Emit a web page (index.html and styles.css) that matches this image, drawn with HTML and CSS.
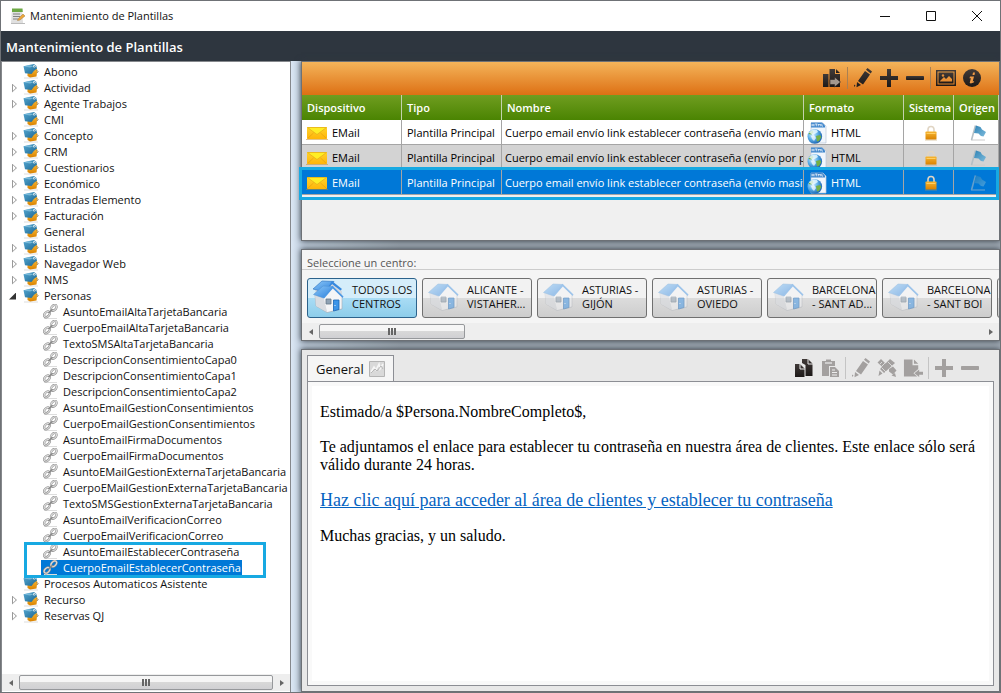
FILE: index.html
```html
<!DOCTYPE html>
<html lang="es">
<head>
<meta charset="utf-8">
<title>Mantenimiento de Plantillas</title>
<link rel="stylesheet" href="styles.css">
</head>
<body>
<svg class="defs" aria-hidden="true">
  <defs>
    <linearGradient id="gBlue" x1="0" y1="0" x2="1" y2="1"><stop offset="0" stop-color="#56a9d4"/><stop offset="1" stop-color="#1d6791"/></linearGradient>
    <linearGradient id="gFlag" x1="0" y1="0" x2="1" y2="1"><stop offset="0" stop-color="#2f83b5"/><stop offset="1" stop-color="#7dbbdc"/></linearGradient>
    <linearGradient id="gOrange" x1="0" y1="0" x2="0" y2="1"><stop offset="0" stop-color="#f7b632"/><stop offset="1" stop-color="#d98200"/></linearGradient>
    <linearGradient id="gMail" x1="0" y1="0" x2="0" y2="1"><stop offset="0" stop-color="#ffd32e"/><stop offset="1" stop-color="#ffb508"/></linearGradient>
    <linearGradient id="gRoof" x1="0" y1="0" x2="1" y2="1"><stop offset="0" stop-color="#8cc8f8"/><stop offset="1" stop-color="#2b7fdc"/></linearGradient>
    <linearGradient id="gWall" x1="0" y1="0" x2="1" y2="1"><stop offset="0" stop-color="#ffffff"/><stop offset="1" stop-color="#c4c8ce"/></linearGradient>
    <radialGradient id="gGlobe" cx=".35" cy=".35" r=".7"><stop offset="0" stop-color="#d9f2ff"/><stop offset=".5" stop-color="#5aaee8"/><stop offset="1" stop-color="#1b62b0"/></radialGradient>
    <linearGradient id="gDark" x1="0" y1="0" x2="0" y2="1"><stop offset="0" stop-color="#403a38"/><stop offset="1" stop-color="#1d1918"/></linearGradient>
  </defs>
  <symbol id="tag" viewBox="0 0 16 16">
    <path d="M1 14h14" stroke="#ddd" stroke-width="1"/>
    <path d="m4.500 8 9.500-3.500.3 2-.8 6-6.500 1L4.500 12z" fill="url(#gOrange)"/>
    <path d="M.5 2.300 6 1 11 0l2.300 1.700.7 3-3 2L8.500 10 2 9.300z" fill="url(#gBlue)"/>
    <path d="m1 2.500 5-1.200 4.500 1L7 3.500z" fill="#8fc9e4" opacity=".7"/>
    <circle cx="11.300" cy="2.300" r="1.200" fill="#e8f5fb"/><circle cx="11.300" cy="2.300" r=".5" fill="#245f80"/>
    <path d="m13.500 6.500 1.800 1-1.300 1.500" fill="none" stroke="#876a40" stroke-width=".7"/>
  </symbol>
  <symbol id="chain" viewBox="0 0 16 16">
    <path d="M1 14.500h13" stroke="#ddd"/>
    <g fill="none" stroke="#8b8b8b" stroke-width="2.200"><ellipse cx="10.800" cy="3.800" rx="3.300" ry="2.200" transform="rotate(-45 10.800 3.800)"/><ellipse cx="4" cy="10.300" rx="3.300" ry="2.200" transform="rotate(-45 4 10.300)"/></g>
    <g fill="none" stroke="#dedede" stroke-width="1.100"><ellipse cx="10.800" cy="3.800" rx="3.300" ry="2.200" transform="rotate(-45 10.800 3.800)"/><ellipse cx="4" cy="10.300" rx="3.300" ry="2.200" transform="rotate(-45 4 10.300)"/></g>
    <path d="m5.500 9 4-3.800" stroke="#888" stroke-width="1.500"/>
  </symbol>
  <symbol id="mail" viewBox="0 0 22 14">
    <path d="M0 13.500h22" stroke="#c58b22" opacity=".5"/>
    <rect x="1" y="1" width="20" height="12" rx="1" fill="url(#gMail)"/>
    <path d="m1.500 1.500 9.500 7 9.500-7z" fill="#ffee25" stroke="#e3ac18" stroke-width=".7"/>
    <path d="m1.500 12.500 6-5.500m13 5.500-6-5.500" stroke="#e5a010" stroke-width=".7"/>
  </symbol>
  <symbol id="htmlfile" viewBox="0 0 20 22">
    <path d="M4 1h12l3 3v17H4z" fill="#f1f6fc" stroke="#b8c6d8" stroke-width=".7"/>
    <path d="M4 .500h11l3 3v2H4z" fill="#3f86cc"/>
    <path d="M5 1.800v2.500M7 1.800v2.500M5 3h2m1-1h2.500M9.300 2v2.300m2 0V2l1 1 1-1v2.300m1.500-2.500v2.300H16" fill="none" stroke="#fff" stroke-width=".7"/>
    <circle cx="7.800" cy="14.500" r="7.300" fill="url(#gGlobe)"/>
    <path d="M1.500 12q1-3 4-3.500l1 2-2 2zM9 14l4-1 1.300 2-2.300 4-2 .5z" fill="#74b044"/>
    <path d="M2 10.500q3-4 8-2.500l1 2-5 3z" fill="#eefaff" opacity=".8"/><path d="m4 14 3-1 2 3-2 3-2-2z" fill="#fff" opacity=".7"/>
  </symbol>
  <symbol id="lock" viewBox="0 0 14 16">
    <path d="M1 15h12" stroke="#b99a5c" opacity=".5"/>
    <path d="M4 7V4.500a3 3 0 0 1 6 0V7" fill="none" stroke="#e0d5c4" stroke-width="1.600"/>
    <rect x="1.500" y="6.500" width="11" height="8" rx=".8" fill="url(#gOrange)"/>
    <path d="M2.500 8.500h9" stroke="#ffcf62"/>
  </symbol>
  <symbol id="flag" viewBox="0 0 16 16">
    <path d="M1 15h14" stroke="#ccc"/><path d="M5.500.500 1.500 15" stroke="#b4bfc5" stroke-width="1.600"/>
    <path d="M6 .500 10.500 2l1.500 2.500 4 2.500-2.500 4.500-2.500-.5-2.500-2.500-4.500-.5z" fill="url(#gFlag)"/>
  </symbol>
  <symbol id="house" viewBox="0 0 32 28">
    <path d="m2 9.500 8 2.500L19.500 2 29 11.500V24l-15 3.500L3 21z" fill="url(#gWall)" stroke="#a7adb5" stroke-width=".6"/>
    <path d="M10.500 12.500 19.500 3 28.500 12v11.500L14 27z" fill="#f4f5f7"/>
    <path d="M10.500 12.500 14 27 3 21 2.500 10z" fill="#d9dce1"/>
    <path d="M.5 9.500 10 1l10 .5L10.500 13z" fill="url(#gRoof)" stroke="#4a8fd0" stroke-width=".5"/>
    <path d="m19.500.8 11 10.700-.8 1.500L19.800 3.500l-8.500 9.800-1.300-.3z" fill="#4b98e5"/>
    <path d="M13 14h5v5h-5z" fill="#8fa2b4" stroke="#667788" stroke-width=".8"/>
    <path d="M20.500 15h5.500v9.500L20.500 26z" fill="#3d95e8" stroke="#1764b5" stroke-width=".8"/><circle cx="22" cy="20.500" r=".6" fill="#fff"/>
  </symbol>
  <symbol id="houses" viewBox="0 0 34 34">
    <path d="m3 9 8 2 9-8 10 8v12L5 22z" fill="#d4d9df"/><path d="M1 9 10 1l12 .5L12 12z" fill="url(#gRoof)" stroke="#286ebd" stroke-width=".6"/><path d="m20 1 10 8-1.500 1.500L20 4l-7 8z" fill="#3789df"/>
    <use href="#house" x="1" y="5" width="32" height="28"/>
  </symbol>
  <symbol id="copyto" viewBox="0 0 20 20"><path d="M7.500 1H13v5h5v13H7.500z"/><path d="M14 1l4 4h-4z"/><path d="M1 6h5.500v13H1z"/><path d="M8 11.500h4.500V9l6 5-6 5v-2.500H8z" fill="#a39990" stroke="#2a2422" stroke-width=".6"/></symbol>
  <symbol id="pencil" viewBox="0 0 20 20"><path d="m12 3 5 3.500-7 10-5-3.500zM4 14l4 3-4.500 2.200zM13 1.800 14.500 0l4.500 3.500-1.300 2z"/><path d="M1 16.500l1.500 1-1.500 1.500z"/></symbol>
  <symbol id="plus" viewBox="0 0 20 20"><path d="M8 1h4v7h7v4h-7v7H8v-7H1V8h7z"/></symbol>
  <symbol id="minus" viewBox="0 0 20 20"><rect x="1" y="8" width="18" height="4" rx=".7"/></symbol>
  <symbol id="image" viewBox="0 0 20 18"><path fill-rule="evenodd" d="M0 1h20v16H0zm1.500 1.500v13h17v-13z"/><path fill-rule="evenodd" d="M2.500 3.500h15v11h-15zm1.500 9h12V10l-3-3-3 3-2-2-4 4z"/><circle cx="7" cy="6.500" r="1.200" fill="#e48f3b"/></symbol>
  <symbol id="info" viewBox="0 0 20 20"><circle cx="10" cy="10" r="9"/><path d="M11 4.500h2L12.500 7h-2zM8 8.500h4l-1.300 5 1.500-.5-.5 1.500-3 1-1-.8 1.200-4.500H7.500z" fill="#ef9a45"/></symbol>
  <symbol id="copy" viewBox="0 0 20 20"><path d="M8 1h6l4.500 4.500V18h-7V7L8 5z"/><path d="M1 6h5l4.500 4.500V19H1z"/><path d="M6 5.500V11h5M14 1v5h5" fill="none" stroke="#e8e8e8"/></symbol>
  <symbol id="paste" viewBox="0 0 20 20"><path d="M2 3h4V1.500h5V3h4v5H9v10H2z"/><path d="M5 5h7" stroke="#e8e8e8" stroke-width="1.300"/><path d="M10 9h5l4 4v6h-9z"/><path d="M12 12h3m-3 2.500h5M12 17h5" stroke="#eee"/></symbol>
  <symbol id="tools" viewBox="0 0 20 20"><path d="m.5 4.500 3.500-3.500 5 5-3 3.500zM12 11l4-2.500 3.500 4-3.500 4-4-3zM13 1l5 4-11 10-4-4zM2.500 12.500l3 3L1.500 18zM14.500 17.500l3.500-2.500 1 4z"/><path d="m3 6 2-2M5 8l3-3M11 4l4 4M5 10l4 4" stroke="#e8e8e8" stroke-width=".8"/></symbol>
  <symbol id="export" viewBox="0 0 21 20"><path d="M1 1h9v6h6v4l-5 4.500 4 3.500H1z"/><path d="m11.500 1 4.500 4.500h-4.500zM12 15.500l5-4V14h4v3h-4v2.500z"/></symbol>
</svg>

<div class="window">
  <header class="titlebar">
    <svg class="app-icon" viewBox="0 0 16 16" aria-hidden="true"><path d="M1 15.500h14" stroke="#bbb"/><path d="M2 1h10l1 14H1z" fill="#e0e0e0"/><path d="M2 .500h10.500l.3 3.500H2z" fill="#6ca844"/><path d="M3 6h7M3 8.500h7M3 11h5" stroke="#828282"/><path d="m8 11 5-5 2 2-5 4-2.500.5z" fill="#eda63a" stroke="#9f793f" stroke-width=".5"/></svg>
    <span class="title">Mantenimiento de Plantillas</span>
    <div class="window-controls">
      <button aria-label="Minimizar"><svg viewBox="0 0 12 12"><path d="M1 6.500h10"/></svg></button>
      <button aria-label="Maximizar"><svg viewBox="0 0 12 12"><path d="M1.500 1.500h9v9h-9z"/></svg></button>
      <button aria-label="Cerrar"><svg viewBox="0 0 12 12"><path d="m1 1 10 10M11 1 1 11"/></svg></button>
    </div>
  </header>
  <h1 class="heading">Mantenimiento de Plantillas</h1>

  <div class="body">
    <nav class="sidebar" aria-label="Plantillas">
      <ul class="tree">
        <li><i class="toggle"></i><svg><use href="#tag"/></svg><span>Abono</span></li>
        <li><button class="toggle" aria-label="Expandir Actividad"></button><svg><use href="#tag"/></svg><span>Actividad</span></li>
        <li><button class="toggle" aria-label="Expandir Agente Trabajos"></button><svg><use href="#tag"/></svg><span>Agente Trabajos</span></li>
        <li><i class="toggle"></i><svg><use href="#tag"/></svg><span>CMI</span></li>
        <li><button class="toggle" aria-label="Expandir Concepto"></button><svg><use href="#tag"/></svg><span>Concepto</span></li>
        <li><button class="toggle" aria-label="Expandir CRM"></button><svg><use href="#tag"/></svg><span>CRM</span></li>
        <li><button class="toggle" aria-label="Expandir Cuestionarios"></button><svg><use href="#tag"/></svg><span>Cuestionarios</span></li>
        <li><button class="toggle" aria-label="Expandir Económico"></button><svg><use href="#tag"/></svg><span>Económico</span></li>
        <li><button class="toggle" aria-label="Expandir Entradas Elemento"></button><svg><use href="#tag"/></svg><span>Entradas Elemento</span></li>
        <li><button class="toggle" aria-label="Expandir Facturación"></button><svg><use href="#tag"/></svg><span>Facturación</span></li>
        <li><i class="toggle"></i><svg><use href="#tag"/></svg><span>General</span></li>
        <li><button class="toggle" aria-label="Expandir Listados"></button><svg><use href="#tag"/></svg><span>Listados</span></li>
        <li><button class="toggle" aria-label="Expandir Navegador Web"></button><svg><use href="#tag"/></svg><span>Navegador Web</span></li>
        <li><button class="toggle" aria-label="Expandir NMS"></button><svg><use href="#tag"/></svg><span>NMS</span></li>
        <li><button class="toggle open" aria-label="Contraer Personas"></button><svg><use href="#tag"/></svg><span>Personas</span>
          <ul>
            <li><svg><use href="#chain"/></svg><span>AsuntoEmailAltaTarjetaBancaria</span></li>
            <li><svg><use href="#chain"/></svg><span>CuerpoEmailAltaTarjetaBancaria</span></li>
            <li><svg><use href="#chain"/></svg><span>TextoSMSAltaTarjetaBancaria</span></li>
            <li><svg><use href="#chain"/></svg><span>DescripcionConsentimientoCapa0</span></li>
            <li><svg><use href="#chain"/></svg><span>DescripcionConsentimientoCapa1</span></li>
            <li><svg><use href="#chain"/></svg><span>DescripcionConsentimientoCapa2</span></li>
            <li><svg><use href="#chain"/></svg><span>AsuntoEmailGestionConsentimientos</span></li>
            <li><svg><use href="#chain"/></svg><span>CuerpoEmailGestionConsentimientos</span></li>
            <li><svg><use href="#chain"/></svg><span>AsuntoEmailFirmaDocumentos</span></li>
            <li><svg><use href="#chain"/></svg><span>CuerpoEmailFirmaDocumentos</span></li>
            <li><svg><use href="#chain"/></svg><span>AsuntoEMailGestionExternaTarjetaBancaria</span></li>
            <li><svg><use href="#chain"/></svg><span>CuerpoEMailGestionExternaTarjetaBancaria</span></li>
            <li><svg><use href="#chain"/></svg><span>TextoSMSGestionExternaTarjetaBancaria</span></li>
            <li><svg><use href="#chain"/></svg><span>AsuntoEmailVerificacionCorreo</span></li>
            <li><svg><use href="#chain"/></svg><span>CuerpoEmailVerificacionCorreo</span></li>
            <li><svg><use href="#chain"/></svg><span>AsuntoEmailEstablecerContraseña</span></li>
            <li class="current"><svg><use href="#chain"/></svg><span>CuerpoEmailEstablecerContraseña</span></li>
          </ul>
        </li>
        <li><i class="toggle"></i><svg><use href="#tag"/></svg><span>Procesos Automaticos Asistente</span></li>
        <li><button class="toggle" aria-label="Expandir Recurso"></button><svg><use href="#tag"/></svg><span>Recurso</span></li>
        <li><button class="toggle" aria-label="Expandir Reservas QJ"></button><svg><use href="#tag"/></svg><span>Reservas QJ</span></li>
      </ul>
      <div class="scrollbar"><button class="arrow left" aria-label="Izquierda"></button><div class="track"><div class="thumb wide"></div></div><button class="arrow right" aria-label="Derecha"></button></div>
    </nav>

    <main class="content">
      <section class="panel templates">
        <div class="toolbar orange">
          <button aria-label="Duplicar"><svg><use href="#copyto"/></svg></button><i class="sep"></i>
          <button aria-label="Editar"><svg><use href="#pencil"/></svg></button>
          <button aria-label="Añadir"><svg><use href="#plus"/></svg></button>
          <button aria-label="Quitar"><svg><use href="#minus"/></svg></button><i class="sep"></i>
          <button aria-label="Imagen"><svg><use href="#image"/></svg></button>
          <button aria-label="Información"><svg><use href="#info"/></svg></button>
        </div>
        <div class="grid-wrap">
        <table class="grid">
          <colgroup><col class="c100"><col class="c100"><col><col class="c100"><col class="c50"><col class="c45"></colgroup>
          <thead><tr><th>Dispositivo</th><th>Tipo</th><th>Nombre</th><th>Formato</th><th>Sistema</th><th>Origen</th></tr></thead>
          <tbody>
            <tr><td><div class="cell"><svg class="mail"><use href="#mail"/></svg>EMail</div></td><td>Plantilla Principal</td><td>Cuerpo email envío link establecer contraseña (envío manual)</td><td><div class="cell"><svg class="file"><use href="#htmlfile"/></svg>HTML</div></td><td class="mid"><svg class="small"><use href="#lock"/></svg></td><td class="mid"><svg class="flag"><use href="#flag"/></svg></td></tr>
            <tr class="alt"><td><div class="cell"><svg class="mail"><use href="#mail"/></svg>EMail</div></td><td>Plantilla Principal</td><td>Cuerpo email envío link establecer contraseña (envío por pro)</td><td><div class="cell"><svg class="file"><use href="#htmlfile"/></svg>HTML</div></td><td class="mid"><svg class="small"><use href="#lock"/></svg></td><td class="mid"><svg class="flag"><use href="#flag"/></svg></td></tr>
            <tr class="selected"><td><div class="cell"><svg class="mail"><use href="#mail"/></svg>EMail</div></td><td>Plantilla Principal</td><td>Cuerpo email envío link establecer contraseña (envío masivo)</td><td><div class="cell"><svg class="file"><use href="#htmlfile"/></svg>HTML</div></td><td class="mid"><svg class="small"><use href="#lock"/></svg></td><td class="mid"><svg class="flag"><use href="#flag"/></svg></td></tr>
          </tbody>
        </table>
        </div>
      </section>

      <section class="panel centers">
        <h2>Seleccione un centro:</h2>
        <div class="center-list">
          <button class="active"><svg><use href="#houses"/></svg><span>TODOS LOS<br>CENTROS</span></button>
          <button><svg><use href="#house"/></svg><span>ALICANTE -<br>VISTAHER...</span></button>
          <button><svg><use href="#house"/></svg><span>ASTURIAS -<br>GIJÓN</span></button>
          <button><svg><use href="#house"/></svg><span>ASTURIAS -<br>OVIEDO</span></button>
          <button><svg><use href="#house"/></svg><span>BARCELONA<br>- SANT AD...</span></button>
          <button><svg><use href="#house"/></svg><span>BARCELONA<br>- SANT BOI</span></button>
          <button aria-label="Siguiente centro"></button>
        </div>
        <div class="scrollbar"><button class="arrow left" aria-label="Izquierda"></button><div class="track"><div class="thumb"></div></div><button class="arrow right" aria-label="Derecha"></button></div>
      </section>

      <section class="panel editor">
        <div class="tabs">
          <button class="tab">General <svg viewBox="0 0 16 16"><path d="M.5.5h15v15H.5z" fill="#d9d9d9" stroke="#b4b4b4"/><path d="m2 11 3-5 2 3 3-6 1 5 3-5" fill="none" stroke="#f6f6f6" stroke-width="1.500"/><path d="m2 12 4-4 2 2 4-5 2 3" fill="none" stroke="#b8b8b8"/></svg></button>
          <div class="toolbar gray">
            <button class="on" aria-label="Copiar"><svg><use href="#copy"/></svg></button>
            <button aria-label="Pegar"><svg><use href="#paste"/></svg></button><i class="sep"></i>
            <button aria-label="Editar"><svg><use href="#pencil"/></svg></button>
            <button aria-label="Herramientas"><svg><use href="#tools"/></svg></button>
            <button aria-label="Exportar"><svg><use href="#export"/></svg></button><i class="sep"></i>
            <button aria-label="Añadir"><svg><use href="#plus"/></svg></button>
            <button aria-label="Quitar"><svg><use href="#minus"/></svg></button>
          </div>
        </div>
        <article class="mail-body">
          <p>Estimado/a $Persona.NombreCompleto$,</p>
          <p>Te adjuntamos el enlace para establecer tu contraseña en nuestra área de clientes. Este enlace sólo será válido durante 24 horas.</p>
          <p><a href="#">Haz clic aquí para acceder al área de clientes y establecer tu contraseña</a></p>
          <p>Muchas gracias, y un saludo.</p>
        </article>
      </section>
    </main>
  </div>
</div>
</body>
</html>
```
FILE: styles.css
```css
*, *::before, *::after { box-sizing: border-box; }
body { margin: 0; font: 12px/16px "Open Sans", "Noto Sans", sans-serif; color: #111; }
button { font: inherit; color: inherit; border: 0; background: none; padding: 0; }
ul { list-style: none; margin: 0; padding: 0; }
svg { display: block; flex: none; }
.defs { position: absolute; width: 0; height: 0; }

.window { display: flex; flex-direction: column; height: 100vh; border: 1px solid #6f7276; overflow: hidden; }
.titlebar { display: flex; align-items: center; height: 30px; flex: none; background: #fff; padding-left: 9px; gap: 4px; font-size: 11px; }
.app-icon { width: 16px; height: 16px; }
.window-controls { display: flex; margin-left: auto; }
.window-controls button { width: 46px; height: 28px; display: grid; place-items: center; }
.window-controls svg { width: 12px; height: 12px; fill: none; stroke: #111; }
.heading { margin: 0; padding: 0 5px; height: 30px; flex: none; background: #2e363f; color: #fff; font-size: 13px; line-height: 32px; font-weight: 600; }
.body { display: flex; flex: 1; min-height: 0; background: linear-gradient(90deg, #dbe7f4 290px, #c5d3e2 300px, #a3adb7 400px, #a3adb7); }

.sidebar { display: flex; flex-direction: column; width: 290px; flex: none; padding-bottom: 1px; background: #fff; border: 1px solid #85888c; border-width: 1px 1px 0; overflow: hidden; }
.tree { flex: 1; min-height: 0; padding: 2px 0 0 10px; font-size: 11px; white-space: nowrap; }
.tree li { display: flex; flex-wrap: wrap; align-items: center; }
.tree li > svg { width: 16px; height: 16px; margin-right: 5px; }
.tree li > span { line-height: 16px; padding-right: 1px; }
.tree ul { flex: 0 0 100%; padding-left: 29px; }
.tree ul li { flex-wrap: nowrap; }
.tree ul li > svg { margin: 0 4px 0 2px; }
.toggle { width: 11px; height: 16px; display: grid; align-items: center; }
button.toggle::before { content: ""; width: 5px; height: 9px; background: #999; clip-path: polygon(0 0, 100% 50%, 0 100%, 0 15%, 1px 20%, 1px 80%, 75% 50%, 1px 20%, 0 15%); }
button.toggle.open::before { width: 7px; height: 7px; margin-left: -3px; background: #333; clip-path: polygon(100% 0, 100% 100%, 0 100%); }
.current { position: relative; width: max-content; background: #0078d7; color: #fff; }
.current::after { content: ""; position: absolute; left: -17px; right: -24px; top: -18px; height: 36px; border: 3px solid #17a9e2; }

.scrollbar { display: flex; height: 17px; flex: none; background: #eee; }
.arrow { width: 17px; display: grid; place-items: center; }
.arrow::before { content: ""; border: 3px solid transparent; }
.arrow.left::before { border-left: 0; border-right: 4px solid #666; }
.arrow.right::before { border-right: 0; border-left: 4px solid #666; }
.track { flex: 1; padding: 1px 0; }
.thumb { width: 22%; height: 15px; border: 1px solid #96989b; border-radius: 2px; background: linear-gradient(#f6f6f6 45%, #d8d8d8 50%, #d0d0d3); display: grid; place-items: center; }
.thumb.wide { width: 100%; }
.thumb::before { content: ""; width: 8px; height: 7px; background: repeating-linear-gradient(90deg, #666 0 2px, transparent 2px 3px); }

.content { flex: 1; min-width: 0; display: flex; flex-direction: column; gap: 8px; padding-left: 10px; }
.panel { flex: none; border: 1px solid #6d7176; background: #f5f5f5; box-shadow: 0 0 6px #303840; min-width: 0; }
.templates { height: 180px; background: #f0f0f0; }
.toolbar { display: flex; align-items: center; }
.toolbar svg { width: 20px; height: 20px; fill: url(#gDark); overflow: visible; }
.orange { height: 33px; justify-content: flex-end; gap: 6px; padding: 0 17px 2px 0; background: linear-gradient(#f4b45a, #dd7014); }
.sep { width: 1px; height: 22px; margin: 0 -1px; background: #a98052; }
.grid-wrap { position: relative; }
.grid-wrap::after { content: ""; position: absolute; left: -3px; right: 0; bottom: -5px; height: 33px; border: 3px solid #17a9e2; }
.grid { width: 100%; table-layout: fixed; border-collapse: separate; border-spacing: 0; font-size: 11px; }
.c100 { width: 100px; } .c50 { width: 50px; } .c45 { width: 45px; }
.grid th { height: 25px; padding: 0 5px; background: linear-gradient(#709d20, #4a8402); color: #fff; text-align: left; font-weight: 600; border-right: 1px solid #c3d2ac; }
.grid td { height: 25px; padding: 2px 3px 0; overflow: hidden; white-space: nowrap; border: solid #a5a5a5; border-width: 0 1px 1px 0; background: #fff; color: #000; }
.grid td:nth-child(2) { padding-left: 5px; }
.grid td:first-child { padding-left: 4px; }
.grid .alt td { background: #d3d3d3; }
.grid .selected { font-weight: 500; }
.grid .selected td { background: #0078d7; color: #fff; }
.cell { display: flex; align-items: center; gap: 4px; }
.mail { width: 22px; height: 14px; }
.file { width: 20px; height: 22px; }
.grid .mid { padding-left: 6px; padding-right: 2px; }
.mid svg { margin: auto; }
.small { width: 14px; height: 16px; }
.flag { width: 16px; height: 16px; }
.selected .flag { opacity: .55; }

.centers { display: flex; flex-direction: column; height: 92px; }
.centers h2 { margin: 0; padding: 6px 5px 0; height: 20px; font-size: 11px; line-height: 14px; font-weight: 400; color: #555; border-bottom: 1px solid #ccc; }
.center-list { display: flex; gap: 5px; padding: 8px 0 5px 5px; overflow: hidden; }
.center-list button { display: flex; align-items: center; gap: 6px; flex: none; width: 110px; height: 40px; padding: 0 4px 2px; border: 1px solid #707070; border-radius: 3px; background: linear-gradient(#f2f2f2 49%, #dcdcdc 50%, #cdcdcd); text-align: left; font-size: 11px; line-height: 14px; white-space: nowrap; }
.center-list svg { width: 34px; height: 28px; opacity: .5; }
.center-list .active { border-color: #2c628b; background: linear-gradient(#d5edfa 49%, #a9dcf5 50%, #8dcdea); }
.center-list .active svg { opacity: 1; height: 34px; }
.centers .scrollbar { margin-top: auto; }

.editor { flex: 1; min-height: 0; display: flex; flex-direction: column; padding: 5px; background: #e8e8e8; }
.tabs { display: flex; height: 26px; flex: none; }
.tab { display: flex; align-items: center; gap: 5px; padding: 0 8px; border: 1px solid #8c8e94; border-bottom: 0; background: #f5f5f5; font-size: 13px; }
.tab svg { width: 16px; height: 16px; }
.gray { margin-left: auto; gap: 6px; padding-right: 14px; }
.gray svg { fill: #a3a09f; }
.gray .on svg { fill: url(#gDark); }
.gray .sep { background: #c4c4c4; }
.mail-body { flex: 1; padding: 4px 12px; background: #fff; border: 1px solid #8c8e94; box-shadow: inset 0 0 0 4px #f9f9f9; font: 16px/18px "Liberation Serif", serif; color: #000; }
.mail-body p { margin: 17px 0; }
.mail-body a { color: #0563c1; font-size: 18px; }
```
